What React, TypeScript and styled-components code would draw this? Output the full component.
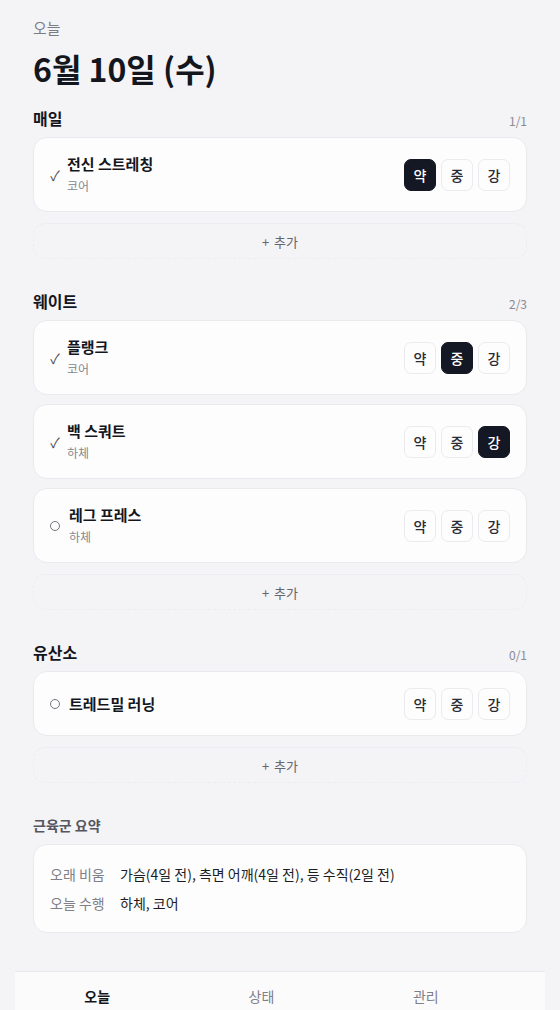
import styled, { createGlobalStyle } from "styled-components";

type Level = "약" | "중" | "강";

type Exercise = {
  name: string;
  part?: string;
  done: boolean;
  level?: Level;
};

type Group = {
  title: string;
  count: string;
  items: Exercise[];
};

const GlobalStyle = createGlobalStyle`
  body {
    margin: 0;
    background: #f4f3f6;
    font-family: "Noto Sans CJK KR", "Noto Sans", sans-serif;
    color: #14161d;
  }
`;

const Page = styled.div`
  display: flex;
  flex-direction: column;
`;

const Main = styled.main`
  padding: 18px 33px 0;
  display: flex;
  flex-direction: column;
`;

const Eyebrow = styled.div`
  font-size: 15px;
  line-height: 20px;
  color: #7c7c84;
`;

const Title = styled.h1`
  margin: 10px 0 0;
  font-size: 32px;
  line-height: 40px;
  font-weight: 700;
  color: #14161d;
`;

const Section = styled.section<{ $first?: boolean }>`
  margin-top: ${(p) => (p.$first ? "20px" : "32px")};
  display: flex;
  flex-direction: column;
`;

const SectionHeader = styled.div`
  display: flex;
  justify-content: space-between;
  align-items: center;
  height: 20px;
`;

const SectionTitle = styled.h2`
  margin: 0;
  font-size: 16px;
  font-weight: 700;
  line-height: 20px;
`;

const SubTitle = styled.h2`
  margin: 0;
  font-size: 14px;
  font-weight: 600;
  line-height: 20px;
  color: #55565e;
`;

const Count = styled.span`
  font-size: 12px;
  color: #8a8a92;
  padding-top: 4px;
`;

const CardList = styled.div`
  margin-top: 9px;
  display: flex;
  flex-direction: column;
  gap: 9px;
`;

const Card = styled.div<{ $single?: boolean }>`
  box-sizing: border-box;
  min-height: ${(p) => (p.$single ? "65px" : "75px")};
  background: #fdfdfe;
  border: 1px solid #eae9ed;
  border-radius: 14px;
  padding: 0 16px 0 15px;
  display: flex;
  align-items: center;
  gap: 6px;
`;

const Mark = styled.span`
  width: 12px;
  display: flex;
  justify-content: center;
  font-size: 14px;
  color: #4b4c54;
`;

const Ring = styled.span`
  width: 8px;
  height: 8px;
  border-radius: 50%;
  border: 1.5px solid #75767e;
`;

const Info = styled.div<{ $pad?: boolean }>`
  flex: 1;
  display: flex;
  flex-direction: column;
  padding-left: ${(p) => (p.$pad ? "2px" : "0")};
`;

const Name = styled.div`
  font-size: 15px;
  font-weight: 700;
  line-height: 20px;
  color: #14161d;
`;

const Part = styled.div`
  margin-top: 3px;
  font-size: 12px;
  line-height: 18px;
  color: #86878f;
`;

const Levels = styled.div`
  display: flex;
  gap: 5px;
`;

const LevelButton = styled.button<{ $active?: boolean }>`
  width: 32px;
  height: 32px;
  padding: 0;
  border-radius: 7px;
  border: 1px solid ${(p) => (p.$active ? "#141824" : "#ebeaee")};
  background: ${(p) => (p.$active ? "#141824" : "#fdfdfe")};
  color: ${(p) => (p.$active ? "#ffffff" : "#2a2b33")};
  font-family: inherit;
  font-size: 14px;
  font-weight: 500;
  cursor: pointer;
`;

const AddButton = styled.button`
  margin-top: 11px;
  height: 36px;
  border: 1px dashed #edecf0;
  border-top-style: solid;
  border-radius: 12px;
  background: transparent;
  color: #65666e;
  font-family: inherit;
  font-size: 13px;
  word-spacing: 2px;
  cursor: pointer;
`;

const SummaryCard = styled.div`
  margin-top: 9px;
  background: #fdfdfe;
  border: 1px solid #eae9ed;
  border-radius: 14px;
  padding: 19px 16px;
  display: flex;
  flex-direction: column;
  gap: 9px;
`;

const SummaryRow = styled.div`
  display: grid;
  grid-template-columns: 70px 1fr;
  font-size: 14px;
  line-height: 20px;
`;

const SummaryLabel = styled.span`
  color: #7e7f87;
`;

const SummaryValue = styled.span`
  color: #1c1d24;
`;

const BottomNav = styled.nav`
  margin: 38px 15px 0;
  background: #fbfbfc;
  border-top: 1px solid #e7e6ea;
  display: grid;
  grid-template-columns: repeat(3, 1fr);
  padding-right: 37px;
`;

const Tab = styled.div<{ $active?: boolean }>`
  text-align: center;
  padding: 14px 0 18px;
  font-size: 14px;
  line-height: 20px;
  font-weight: ${(p) => (p.$active ? 700 : 400)};
  color: ${(p) => (p.$active ? "#14161d" : "#7e7f87")};
`;

const groups: Group[] = [
  {
    title: "매일",
    count: "1/1",
    items: [{ name: "전신 스트레칭", part: "코어", done: true, level: "약" }],
  },
  {
    title: "웨이트",
    count: "2/3",
    items: [
      { name: "플랭크", part: "코어", done: true, level: "중" },
      { name: "백 스쿼트", part: "하체", done: true, level: "강" },
      { name: "레그 프레스", part: "하체", done: false },
    ],
  },
  {
    title: "유산소",
    count: "0/1",
    items: [{ name: "트레드밀 러닝", done: false }],
  },
];

const levels: Level[] = ["약", "중", "강"];

function ExerciseCard({ item }: { item: Exercise }) {
  return (
    <Card $single={!item.part}>
      <Mark>{item.done ? "✓" : <Ring />}</Mark>
      <Info $pad={!item.done}>
        <Name>{item.name}</Name>
        {item.part && <Part>{item.part}</Part>}
      </Info>
      <Levels>
        {levels.map((l) => (
          <LevelButton key={l} $active={item.level === l}>
            {l}
          </LevelButton>
        ))}
      </Levels>
    </Card>
  );
}

export default function App() {
  return (
    <Page>
      <GlobalStyle />
      <Main>
        <Eyebrow>오늘</Eyebrow>
        <Title>6월 10일 (수)</Title>
        {groups.map((g, i) => (
          <Section key={g.title} $first={i === 0}>
            <SectionHeader>
              <SectionTitle>{g.title}</SectionTitle>
              <Count>{g.count}</Count>
            </SectionHeader>
            <CardList>
              {g.items.map((item) => (
                <ExerciseCard key={item.name} item={item} />
              ))}
            </CardList>
            <AddButton>+ 추가</AddButton>
          </Section>
        ))}
        <Section>
          <SectionHeader>
            <SubTitle>근육군 요약</SubTitle>
          </SectionHeader>
          <SummaryCard>
            <SummaryRow>
              <SummaryLabel>오래 비움</SummaryLabel>
              <SummaryValue>가슴(4일 전), 측면 어깨(4일 전), 등 수직(2일 전)</SummaryValue>
            </SummaryRow>
            <SummaryRow>
              <SummaryLabel>오늘 수행</SummaryLabel>
              <SummaryValue>하체, 코어</SummaryValue>
            </SummaryRow>
          </SummaryCard>
        </Section>
      </Main>
      <BottomNav>
        <Tab $active>오늘</Tab>
        <Tab>상태</Tab>
        <Tab>관리</Tab>
      </BottomNav>
    </Page>
  );
}
